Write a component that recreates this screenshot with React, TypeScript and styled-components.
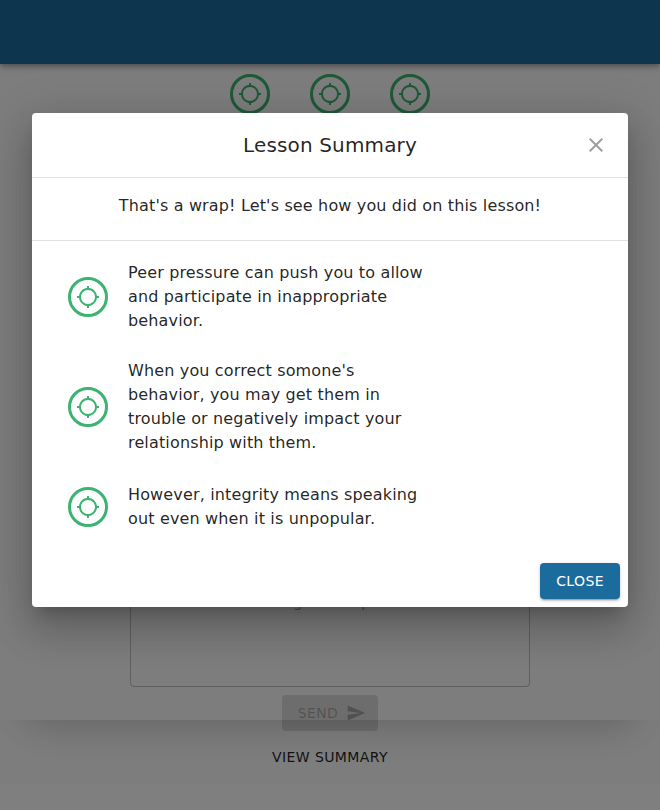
import React from "react";
import styled, { createGlobalStyle } from "styled-components";

const GlobalStyle = createGlobalStyle`
  *, *::before, *::after { box-sizing: border-box; }
  body {
    margin: 0;
    background: #fff;
    color: rgba(0, 0, 0, 0.87);
    font: 400 16px/1.5 "DejaVu Sans", sans-serif;
    letter-spacing: 0.00938em;
    overflow: hidden;
  }
`;

const elevation24 = `0 11px 15px -7px rgba(0,0,0,.2), 0 24px 38px 3px rgba(0,0,0,.14), 0 9px 46px 8px rgba(0,0,0,.12)`;

const Screen = styled.div`
  position: relative;
  height: 810px;
  overflow: hidden;
`;

const Page = styled.div`
  height: 784px;
  background: #fafafa;
  display: flex;
  flex-direction: column;
  align-items: center;
`;

const AppBar = styled.header`
  flex: none;
  align-self: stretch;
  height: 64px;
  background: #1b6b9c;
  box-shadow: 0 2px 4px -1px rgba(0,0,0,.2), 0 4px 5px 0 rgba(0,0,0,.14), 0 1px 10px 0 rgba(0,0,0,.12);
`;

const Goals = styled.div`
  display: flex;
  gap: 40px;
  padding-top: 10px;
`;

const Badge = styled.span`
  flex: none;
  display: flex;
  align-items: center;
  justify-content: center;
  width: 40px;
  height: 40px;
  border: 3px solid #3cb371;
  border-radius: 50%;
  color: #3cb371;
  svg { width: 24px; height: 24px; fill: currentColor; }
`;

const Message = styled.div`
  width: 400px;
  height: 121px;
  margin-top: 452px;
  padding: 25px 14px 0 111px;
  border: 1px solid rgba(0, 0, 0, 0.23);
  border-radius: 4px;
  color: rgba(0, 0, 0, 0.38);
  line-height: 19px;
  white-space: nowrap;
`;

const Button = styled.button<{ $kind: "disabled" | "text" | "primary" }>`
  display: inline-flex;
  align-items: center;
  justify-content: center;
  height: 36px;
  padding: 0 16px;
  border: 0;
  border-radius: 4px;
  font: 400 14px/24.5px "DejaVu Sans", sans-serif;
  letter-spacing: 0.02857em;
  text-transform: uppercase;
  background: ${(p) => ({ disabled: "rgba(0,0,0,.12)", text: "transparent", primary: "#1b6b9c" })[p.$kind]};
  color: ${(p) => ({ disabled: "rgba(0,0,0,.26)", text: "rgba(0,0,0,.87)", primary: "#fff" })[p.$kind]};
  box-shadow: ${(p) =>
    p.$kind === "primary"
      ? "0 3px 1px -2px rgba(0,0,0,.2), 0 2px 2px 0 rgba(0,0,0,.14), 0 1px 5px 0 rgba(0,0,0,.12)"
      : "none"};
`;

const SendButton = styled(Button)`
  margin: 8px 0;
  padding: 0 12px 0 16px;
  svg { width: 20px; height: 20px; margin-left: 8px; fill: currentColor; }
`;

const Backdrop = styled.div`
  position: absolute;
  inset: 0;
  background: rgba(0, 0, 0, 0.5);
`;

const LowerShadow = styled.div`
  position: absolute;
  top: 720px;
  left: 0;
  right: 0;
  height: 90px;
  padding: 0 32px;
  overflow: hidden;
  &::before {
    content: "";
    display: block;
    height: 494px;
    margin-top: -517px;
    border-radius: 4px;
    box-shadow: ${elevation24};
  }
`;

const ModalLayer = styled.div`
  position: absolute;
  top: 0;
  left: 0;
  right: 0;
  height: 720px;
  overflow: hidden;
  display: flex;
  align-items: center;
  padding: 0 32px;
`;

const Dialog = styled.section`
  flex: 1;
  height: 494px;
  display: flex;
  flex-direction: column;
  background: #fff;
  border-radius: 4px;
  box-shadow: ${elevation24};
`;

const DialogHeader = styled.header`
  display: grid;
  grid-template-columns: 48px 1fr 48px;
  align-items: center;
  height: 64px;
  padding: 0 8px;
`;

const Title = styled.h2`
  grid-column: 2;
  margin: 0;
  text-align: center;
  font-size: 20px;
  font-weight: 400;
  line-height: 32px;
  letter-spacing: 0.0075em;
`;

const CloseIcon = styled.button`
  display: flex;
  justify-content: center;
  padding: 12px;
  border: 0;
  background: none;
  color: #9e9e9e;
  svg { width: 24px; height: 24px; fill: currentColor; }
`;

const Intro = styled.p`
  margin: 0;
  height: 64px;
  padding-top: 16px;
  border: solid rgba(0, 0, 0, 0.12);
  border-width: 1px 0;
  text-align: center;
`;

const Points = styled.ul`
  flex: 1;
  margin: 0;
  padding: 20px 36px 0;
  list-style: none;
  display: flex;
  flex-direction: column;
`;

const Point = styled.li<{ $gap: number }>`
  display: flex;
  align-items: center;
  gap: 20px;
  margin-bottom: ${(p) => p.$gap}px;
  p { width: 300px; margin: 0; }
`;

const Actions = styled.footer`
  display: flex;
  justify-content: flex-end;
  padding: 8px;
`;

const Target = () => (
  <Badge>
    <svg viewBox="0 0 24 24">
      <path d="M20.94 11c-.46-4.17-3.77-7.48-7.94-7.94V1h-2v2.06C6.83 3.52 3.52 6.83 3.06 11H1v2h2.06c.46 4.17 3.77 7.48 7.94 7.94V23h2v-2.06c4.17-.46 7.48-3.77 7.94-7.94H23v-2h-2.06zM12 19c-3.87 0-7-3.13-7-7s3.13-7 7-7 7 3.13 7 7-3.13 7-7 7z" />
    </svg>
  </Badge>
);

const points = [
  { text: "Peer pressure can push you to allow and participate in inappropriate behavior.", gap: 26 },
  {
    text: "When you correct somone's behavior, you may get them in trouble or negatively impact your relationship with them.",
    gap: 28,
  },
  { text: "However, integrity means speaking out even when it is unpopular.", gap: 0 },
];

export default function App() {
  return (
    <Screen>
      <GlobalStyle />
      <Page>
        <AppBar />
        <Goals>
          <Target />
          <Target />
          <Target />
        </Goals>
        <Message>Waiting for response...</Message>
        <SendButton $kind="disabled" disabled>
          Send
          <svg viewBox="0 0 24 24">
            <path d="M2.01 21L23 12 2.01 3 2 10l15 2-15 2z" />
          </svg>
        </SendButton>
        <Button $kind="text">View Summary</Button>
      </Page>
      <Backdrop />
      <LowerShadow />
      <ModalLayer>
        <Dialog role="dialog" aria-labelledby="summary-title">
          <DialogHeader>
            <Title id="summary-title">Lesson Summary</Title>
            <CloseIcon aria-label="Close">
              <svg viewBox="0 0 24 24">
                <path d="M19 6.41L17.59 5 12 10.59 6.41 5 5 6.41 10.59 12 5 17.59 6.41 19 12 13.41 17.59 19 19 17.59 13.41 12z" />
              </svg>
            </CloseIcon>
          </DialogHeader>
          <Intro>That's a wrap! Let's see how you did on this lesson!</Intro>
          <Points>
            {points.map((p) => (
              <Point key={p.text} $gap={p.gap}>
                <Target />
                <p>{p.text}</p>
              </Point>
            ))}
          </Points>
          <Actions>
            <Button $kind="primary">Close</Button>
          </Actions>
        </Dialog>
      </ModalLayer>
    </Screen>
  );
}
